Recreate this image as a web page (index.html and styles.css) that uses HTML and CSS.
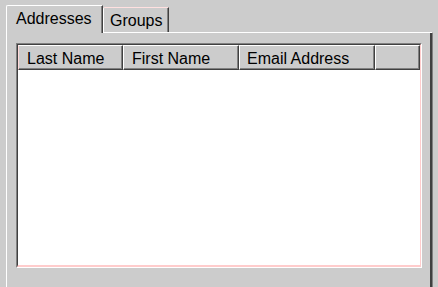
FILE: index.html
```html
<!DOCTYPE html>
<html>
<head>
<meta charset="utf-8">
<link rel="stylesheet" href="styles.css">
</head>
<body>
<div class="tabs">
  <div class="tab active">Addresses</div>
  <div class="tab">Groups</div>
</div>
<div class="panel">
  <div class="listview">
    <div class="lv-inner">
      <div class="header">
        <div class="col c1">Last Name</div>
        <div class="col c2">First Name</div>
        <div class="col c3">Email Address</div>
        <div class="col c4"></div>
      </div>
      <div class="lv-body"></div>
    </div>
  </div>
</div>
</body>
</html>
```
FILE: styles.css
```css
html, body {
  margin: 0;
  padding: 0;
}
body {
  background: #cccccc;
  font-family: "Liberation Sans", Arial, sans-serif;
  font-size: 16px;
  color: #000;
  width: 438px;
  height: 287px;
  overflow: hidden;
}
.tabs {
  display: flex;
  align-items: flex-end;
  padding: 5px 0 0 6px;
  box-sizing: border-box;
  height: 33px;
  margin-bottom: -1px;
  position: relative;
  z-index: 1;
}
.tab {
  box-sizing: border-box;
  line-height: 18px;
  background: #cccccc;
  white-space: nowrap;
}
.tab.active {
  width: 97px;
  height: 28px;
  padding: 4px 0 0 9px;
  border-top: 1px solid #ffffff;
  border-left: 1px solid #ffffff;
  border-right: 1px solid #404040;
  border-top-left-radius: 2px;
  box-shadow: inset -1px 0 0 #808080;
}
.tab:not(.active) {
  width: 66px;
  height: 25px;
  margin-bottom: 1px;
  padding: 4px 0 0 6px;
  border-top: 1px solid #ffe0e0;
  border-left: 1px solid #ffffff;
  border-right: 1px solid #404040;
  border-top-left-radius: 2px;
  box-shadow: inset -1px 0 0 #808080;
}
.panel {
  box-sizing: border-box;
  margin-left: 6px;
  width: 427px;
  height: 256px;
  padding: 10px 0 0 9px;
  border-top: 1px solid #ffffff;
  border-left: 1px solid #ffffff;
  border-right: 1px solid #808080;
  border-bottom: 1px solid #808080;
  box-shadow: inset -2px 0 0 #404040;
}
.listview {
  box-sizing: border-box;
  width: 406px;
  height: 225px;
  border-top: 1px solid #808080;
  border-left: 1px solid #808080;
  border-right: 1px solid #ffffff;
  border-bottom: 1px solid #ffffff;
}
.lv-inner {
  box-sizing: border-box;
  height: 100%;
  display: flex;
  flex-direction: column;
  border-top: 1px solid #404040;
  border-left: 1px solid #404040;
  border-right: 1px solid #ffcccc;
  border-bottom: 2px solid #ffcccc;
  background: #ffffff;
}
.header {
  display: flex;
  height: 25px;
  flex: none;
}
.col {
  box-sizing: border-box;
  height: 25px;
  padding: 4px 0 0 8px;
  line-height: 18px;
  background: #cccccc;
  border-top: 1px solid #ffffff;
  border-left: 1px solid #ffffff;
  border-right: 1px solid #404040;
  border-bottom: 1px solid #404040;
  box-shadow: inset -1px -1px 0 #808080;
  white-space: nowrap;
}
.c1 { width: 105px; border-left-color: #ffd8d8; }
.c2 { width: 116px; }
.c3 { width: 136px; padding-left: 7px; }
.c4 { flex: 1; }
.lv-body {
  flex: 1;
  background: #ffffff;
}
```
